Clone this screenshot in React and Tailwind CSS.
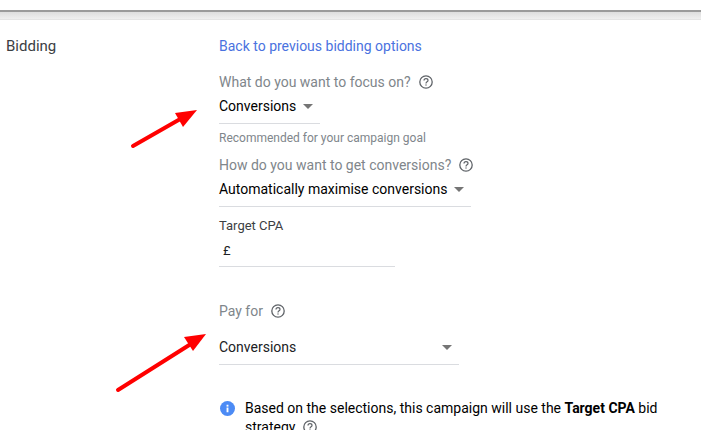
function Help({ className = "" }) {
  return (
    <svg width="14" height="14" viewBox="0 0 14 14" className={className} fill="none">
      <circle cx="7" cy="7" r="6.2" stroke="#5f6368" strokeWidth="1.3" />
      <path d="M5 5.5C5 4.3 5.9 3.6 7 3.6C8.1 3.6 9 4.3 9 5.4C9 6.8 7 6.8 7 8.4" stroke="#5f6368" strokeWidth="1.2" />
      <rect x="6.4" y="9.4" width="1.2" height="1.2" fill="#5f6368" />
    </svg>
  );
}

function Caret({ className = "" }) {
  return <span className={`block w-0 h-0 border-l-[5px] border-r-[5px] border-t-[5px] border-l-transparent border-r-transparent border-t-[#757575] ${className}`} />;
}

function Arrow({ className, x1, y1, x2, y2, head }) {
  return (
    <svg className={className} width="701" height="430" viewBox="0 0 701 430" fill="none">
      <line x1={x1} y1={y1} x2={x2} y2={y2} stroke="#ff0000" strokeWidth="4" strokeLinecap="round" />
      <polygon points={head} fill="#ff0000" />
    </svg>
  );
}

export default function App() {
  return (
    <div className="relative w-[701px] h-[430px] overflow-hidden bg-white font-['Roboto',sans-serif] text-[14px]">
      <div className="h-[10px]" />
      <div className="h-[10px] border-t-2 border-t-[#9a9a9a] border-b border-b-[#e4e4e4] bg-gradient-to-b from-[#dddddd] to-[#efefef]" />
      <div className="flex">
        <div className="w-[219px] pl-[6px] pt-[16px] text-[15px] leading-[20px] text-[#3c4043]">Bidding</div>
        <div className="flex-1 pt-[16px]">
          <div className="leading-[20px] text-[#4a72e0]">Back to previous bidding options</div>
          <div className="mt-[16px] flex items-center gap-[8px] leading-[20px] text-[#80868b]">
            What do you want to focus on? <Help />
          </div>
          <div className="mt-[4px] w-[101px] h-[28px] border-b border-[#dadce0] flex items-start gap-[7px] leading-[20px] text-[#000000]">
            Conversions <Caret className="mt-[8px]" />
          </div>
          <div className="mt-[5px] text-[12px] leading-[18px] text-[#80868b]">Recommended for your campaign goal</div>
          <div className="mt-[8px] flex items-center gap-[8px] leading-[20px] text-[#80868b]">
            How do you want to get conversions? <Help />
          </div>
          <div className="mt-[4px] w-[252px] h-[28px] border-b border-[#dadce0] flex items-start gap-[7px] leading-[20px] text-[#000000]">
            Automatically maximise conversions <Caret className="mt-[8px]" />
          </div>
          <div className="mt-[10px] text-[13px] leading-[18px] text-[#3c4043]">Target CPA</div>
          <div className="mt-[6px] w-[176px] h-[26px] border-b border-[#dadce0] pl-[4px] text-[13px] leading-[20px] text-[#202124]">£</div>
          <div className="mt-[34px] flex items-center gap-[8px] leading-[20px] text-[#80868b]">
            Pay for <Help />
          </div>
          <div className="mt-[16px] w-[240px] h-[28px] border-b border-[#dadce0] flex items-start justify-between pr-[7px] leading-[20px] text-[#202124]">
            Conversions <Caret className="mt-[8px]" />
          </div>
          <div className="mt-[34px] flex gap-[10px] w-[455px] pl-[1px]">
            <svg width="15" height="15" viewBox="0 0 16 16" className="shrink-0 mt-[2px]">
              <circle cx="8" cy="8" r="8" fill="#4c8bf5" />
              <rect x="7" y="7" width="2" height="5" fill="#ffffff" />
              <rect x="7" y="4" width="2" height="2" fill="#ffffff" />
            </svg>
            <div className="leading-[19px] text-[#000000]">
              Based on the selections, this campaign will use the <b className="font-bold">Target CPA</b> bid strategy <Help className="inline-block ml-[4px] align-[-2px]" />
            </div>
          </div>
        </div>
      </div>
      <Arrow className="absolute left-0 top-0" x1={133} y1={146} x2={182} y2={118} head="197,110 175,113 183,127" />
      <Arrow className="absolute left-0 top-0" x1={118} y1={390} x2={194} y2={342} head="206,334 184,337 193,351" />
    </div>
  );
}
